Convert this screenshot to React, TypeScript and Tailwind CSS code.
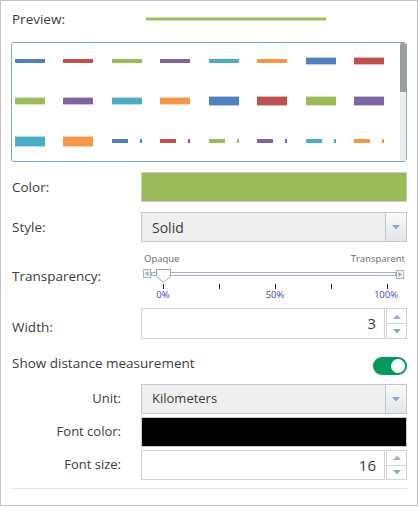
const BLUE = "#4f81bd";
const RED = "#c0504d";
const GREEN = "#9bbb59";
const PURPLE = "#8064a2";
const CYAN = "#4bacc6";
const ORANGE = "#f79646";

type Swatch = { color: string; h: number; dashed?: boolean };

const rows: Swatch[][] = [
  [
    { color: BLUE, h: 4 },
    { color: RED, h: 4 },
    { color: GREEN, h: 4 },
    { color: PURPLE, h: 4 },
    { color: CYAN, h: 4 },
    { color: ORANGE, h: 4 },
    { color: BLUE, h: 8 },
    { color: RED, h: 8 },
  ],
  [
    { color: GREEN, h: 8 },
    { color: PURPLE, h: 8 },
    { color: CYAN, h: 8 },
    { color: ORANGE, h: 8 },
    { color: BLUE, h: 10 },
    { color: RED, h: 10 },
    { color: GREEN, h: 10 },
    { color: PURPLE, h: 10 },
  ],
  [
    { color: CYAN, h: 11 },
    { color: ORANGE, h: 11 },
    { color: BLUE, h: 4, dashed: true },
    { color: RED, h: 4, dashed: true },
    { color: GREEN, h: 4, dashed: true },
    { color: PURPLE, h: 4, dashed: true },
    { color: CYAN, h: 4, dashed: true },
    { color: ORANGE, h: 4, dashed: true },
  ],
];

function SwatchLine({ s }: { s: Swatch }) {
  if (s.dashed) {
    return (
      <div className="flex w-[30px] items-center">
        <div className="h-[4px] w-[16px]" style={{ backgroundColor: s.color }} />
        <div className="ml-[12px] h-[4px] w-[2px]" style={{ backgroundColor: s.color }} />
      </div>
    );
  }
  const edged = s.h > 4;
  return (
    <div
      className={edged ? "w-[30px] border-y bg-clip-padding" : "w-[30px]"}
      style={{
        height: s.h,
        backgroundColor: s.color,
        borderColor: edged ? s.color + "66" : undefined,
      }}
    />
  );
}

function DownArrow() {
  return (
    <svg width="8" height="5" viewBox="0 0 8 5">
      <path d="M0 0H8L4 4.5Z" fill="#8ea6c9" />
    </svg>
  );
}

function UpArrow() {
  return (
    <svg width="8" height="5" viewBox="0 0 8 5">
      <path d="M0 5H8L4 0.5Z" fill="#9fb3d1" />
    </svg>
  );
}

function Select({ value, size }: { value: string; size: string }) {
  return (
    <div className="flex h-full w-[266px] border border-[#c3c7d0] bg-[#efefef]">
      <div className={`flex flex-1 items-center pl-[10px] text-[#3c3c3c] ${size}`}>{value}</div>
      <div className="flex w-[21px] items-center justify-center border-l border-[#c3c7d0] bg-gradient-to-b from-[#fafafa] to-[#e2e4e8]">
        <DownArrow />
      </div>
    </div>
  );
}

function NumberInput({ value }: { value: string }) {
  return (
    <div className="flex h-full w-[266px] gap-[1px]">
      <div className="flex flex-1 items-center justify-end border border-[#d3d3d3] bg-white pr-[8px] text-[15px] text-[#3c3c3c]">
        {value}
      </div>
      <div className="flex w-[21px] flex-col border border-[#d3d3d3] bg-white">
        <div className="flex flex-1 items-center justify-center border-b border-[#d3d3d3]">
          <UpArrow />
        </div>
        <div className="flex flex-1 items-center justify-center">
          <DownArrow />
        </div>
      </div>
    </div>
  );
}

function Slider() {
  const ticks = [22, 78, 134, 190, 246];
  return (
    <div className="relative h-[48px] w-[266px]">
      <div className="flex justify-between pl-[3px] pr-[2px] pt-[1px] text-[9.5px] leading-[12px] text-[#6a6a6a]">
        <span>Opaque</span>
        <span>Transparent</span>
      </div>
      <svg className="absolute left-0 top-[16px]" width="266" height="22" viewBox="0 0 266 22">
        {/* left button */}
        <rect x="2.5" y="1.5" width="7" height="8" fill="#f2f4f7" stroke="#a9b1be" />
        <path d="M7.5 3L4 5.5L7.5 8Z" fill="#8ea6c9" />
        {/* track */}
        <rect x="10.5" y="4.5" width="244" height="3" fill="#fff" stroke="#a9b1be" />
        {/* right button */}
        <rect x="255.5" y="2.5" width="7" height="8" fill="#f2f4f7" stroke="#a9b1be" />
        <path d="M257.5 4L261 6.5L257.5 9Z" fill="#8ea6c9" />
        {/* thumb */}
        <path d="M15.5 1.5H29.5V8.5L22.5 14.5L15.5 8.5Z" fill="#fbfbfb" stroke="#9aa3b0" />
        {ticks.map((t) => (
          <rect key={t} x={t} y="16" width="1" height="5" fill="#222" />
        ))}
      </svg>
      {[
        { l: "0%", x: 22 },
        { l: "50%", x: 134 },
        { l: "100%", x: 245 },
      ].map((p) => (
        <span
          key={p.l}
          className="absolute top-[37px] -translate-x-1/2 text-[9.5px] leading-[12px] text-[#3a4cb8]"
          style={{ left: p.x }}
        >
          {p.l}
        </span>
      ))}
    </div>
  );
}

export default function App() {
  return (
    <div className="h-[507px] w-[419px] bg-white font-['Open_Sans',sans-serif]">
      <div className="flex h-[506px] w-[418px] flex-col border border-[#c4c4c4] px-[10px] pt-[5px] text-[#3c3c3c]">
        {/* Preview */}
        <div className="flex h-[26px] items-center">
          <span className="w-[135px] pl-[1px] text-[13.5px]">Preview:</span>
          <div className="h-[4px] w-[180px] border-y border-[#9bbb5977] bg-[#9bbb59] bg-clip-padding" />
        </div>

        {/* Symbol gallery */}
        <div className="mt-[10px] flex h-[120px] rounded-[3px] border border-[#7ea7cc]">
          <div className="flex flex-col gap-[4px] pl-[3px]">
            {rows.map((row, i) => (
              <div key={i} className="flex h-[36px] w-[369px] items-center justify-between">
                {row.map((s, j) => (
                  <SwatchLine key={j} s={s} />
                ))}
              </div>
            ))}
          </div>
          <div className="ml-auto flex w-[6px] flex-col bg-[#ececec]">
            <div className="h-[49px] rounded-t-[2px] bg-[#9d9d9d]" />
          </div>
        </div>

        {/* Color */}
        <div className="mt-[10px] flex h-[30px] items-center">
          <span className="w-[130px] pl-[1px] text-[13.5px]">Color:</span>
          <div className="h-full w-[266px] border border-[#c9c9c9] bg-[#9bbb59]" />
        </div>

        {/* Style */}
        <div className="mt-[10px] flex h-[30px] items-center">
          <span className="w-[130px] pl-[1px] text-[13.5px]">Style:</span>
          <Select value="Solid" size="text-[14px]" />
        </div>

        {/* Transparency */}
        <div className="mt-[10px] flex items-center">
          <span className="w-[130px] pl-[1px] text-[13.5px]">Transparency:</span>
          <Slider />
        </div>

        {/* Width */}
        <div className="mt-[8px] flex h-[31px] items-center">
          <span className="w-[130px] pl-[1px] pt-[8px] text-[13.5px]">Width:</span>
          <NumberInput value="3" />
        </div>

        {/* Show distance measurement */}
        <div className="mt-[10px] flex h-[28px] items-center justify-between">
          <span className="pl-[1px] text-[13.5px]">Show distance measurement</span>
          <div className="mt-[5px] flex h-[18px] w-[34px] items-center justify-end rounded-full bg-[#009a5c] pr-[2px]">
            <div className="h-[14px] w-[14px] rounded-full bg-white" />
          </div>
        </div>

        {/* Unit */}
        <div className="mt-[7px] flex h-[30px] items-center">
          <span className="mr-[20px] w-[110px] text-right text-[13px]">Unit:</span>
          <Select value="Kilometers" size="text-[13px]" />
        </div>

        {/* Font color */}
        <div className="mt-[3px] flex h-[30px] items-center">
          <span className="mr-[20px] w-[110px] text-right text-[13px]">Font color:</span>
          <div className="h-full w-[266px] border border-[#c9c9c9] bg-black" />
        </div>

        {/* Font size */}
        <div className="mt-[3px] flex h-[30px] items-center">
          <span className="mr-[20px] w-[110px] text-right text-[13px]">Font size:</span>
          <NumberInput value="16" />
        </div>

        <div className="mt-[8px] h-px bg-[#e6e6e6]" />
      </div>
    </div>
  );
}
